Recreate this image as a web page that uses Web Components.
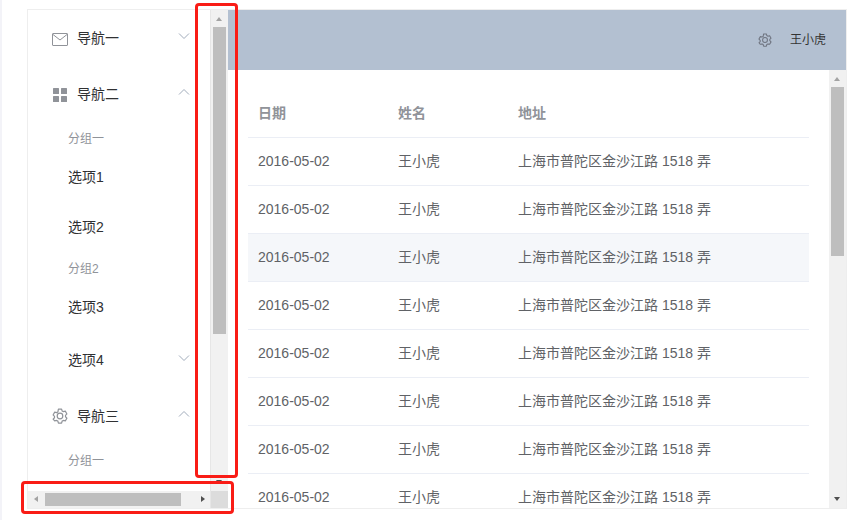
<!DOCTYPE html>
<html lang="zh">
<head>
<meta charset="utf-8">
<title>Layout</title>
<style>
  html, body { margin: 0; width: 860px; height: 520px; overflow: hidden; background: #fff; }
  body { font-family: "Liberation Sans", "Noto Sans CJK SC", sans-serif; }
</style>
</head>
<body>
<app-frame>
  <side-menu slot="side"></side-menu>
  <top-bar slot="top"></top-bar>
  <data-table slot="body"></data-table>
</app-frame>
<red-box style="left:195px;top:3px;width:43px;height:475px"></red-box>
<red-box style="left:21px;top:481px;width:213px;height:33px"></red-box>

<script>
const GEAR_PATH = 'M6.4.7h3.2l.5 1.9 1.3.7 1.9-.5 1.6 2.8-1.4 1.4v1.400l1.400 1.400-1.600 2.800-1.900-.5-1.300.7-.5 1.900H6.400l-.5-1.900-1.300-.7-1.900.5L1.100 10.800l1.400-1.400V8L1.100 6.600l1.600-2.800 1.900.5 1.300-.7z';
const ICONS = {
  mail: '<svg width="16" height="13" viewBox="0 0 16 13" fill="none" stroke="#909399"><rect x=".5" y=".5" width="15" height="12" rx=".5"/><path d="M1 1.5l7 5.5 7-5.5"/></svg>',
  grid: '<svg width="14" height="14" viewBox="0 0 14 14" fill="#909399"><rect width="6" height="6" rx=".5"/><rect x="8" width="6" height="6" rx=".5"/><rect y="8" width="6" height="6" rx=".5"/><rect x="8" y="8" width="6" height="6" rx=".5"/></svg>',
  gear: `<svg width="16" height="16" viewBox="0 0 16 16" fill="none" stroke="#909399" stroke-width="1.2" stroke-linejoin="round"><path d="${GEAR_PATH}" transform="translate(0 .35)"/><circle cx="8" cy="8" r="2.800"/></svg>`
};

class AppFrame extends HTMLElement {
  connectedCallback() {
    this.attachShadow({ mode: 'open' });
    this.shadowRoot.innerHTML = `
      <style>
        :host { display: block; height: 520px; box-sizing: border-box; padding: 9px 13px 11px 25px; border-left: 2px solid #f3f3f8; }
        .box { display: flex; height: 500px; box-sizing: border-box; border: 1px solid #eee; }
        .left { flex: none; width: 200px; display: grid; grid-template: 481px 17px / 183px 17px; }
        .corner { background: #dcdcdc; }
        .right { flex: 1; min-width: 0; display: flex; flex-direction: column; }
        .main { flex: 1; min-height: 0; display: flex; }
        .view { flex: 1; min-width: 0; overflow: hidden; padding: 20px 20px 0; }
        .vp { overflow: hidden; border-right: 1px solid #e6e6e6; }
      </style>
      <div class="box">
        <div class="left">
          <div class="vp"><slot name="side"></slot></div>
          <fake-scroll start="17" size="307"></fake-scroll>
          <fake-scroll horizontal start="17" size="136" style="border-right:1px solid #e6e6e6"></fake-scroll>
          <div class="corner"></div>
        </div>
        <div class="right">
          <slot name="top"></slot>
          <div class="main">
            <div class="view"><slot name="body"></slot></div>
            <fake-scroll start="17" size="169"></fake-scroll>
          </div>
        </div>
      </div>`;
  }
}

// the page draws its own scrollbars so they look like the Windows ones
class FakeScroll extends HTMLElement {
  connectedCallback() {
    const h = this.hasAttribute('horizontal');
    const start = this.getAttribute('start');
    const size = this.getAttribute('size');
    this.attachShadow({ mode: 'open' });
    this.shadowRoot.innerHTML = `
      <style>
        :host { display: block; position: relative; box-sizing: border-box; background: #f1f1f1; flex: none; overflow: hidden; ${h ? 'height: 17px;' : 'width: 17px;'} }
        .thumb { background: #bebebe; ${h ? `margin: 2px 0 0 ${start}px; height: 13px; width: ${size}px;` : `margin: ${start}px 2px 0; width: 13px; height: ${size}px;`} }
        .a { position: absolute; width: 0; height: 0; border: 0 solid transparent; }
        .up { top: 7px; left: 5px; border-width: 0 3.5px 4px; border-bottom-color: #a3a3a3; }
        .down { bottom: 7px; left: 5px; border-width: 4px 3.5px 0; border-top-color: #505050; }
        .back { left: 6px; top: 5px; border-width: 3.5px 4px 3.5px 0; border-right-color: #a3a3a3; }
        .next { right: 5px; top: 5px; border-width: 3.5px 0 3.5px 4px; border-left-color: #505050; }
      </style>
      <div class="thumb"></div>
      <i class="a ${h ? 'back' : 'up'}"></i><i class="a ${h ? 'next' : 'down'}"></i>`;
  }
}

class MenuRow extends HTMLElement {
  connectedCallback() {
    const icon = this.getAttribute('icon');
    const arrow = this.getAttribute('arrow');
    const chev = arrow === 'up' ? 'M1 5.500l5-5 5 5' : 'M1 .5l5 5 5-5';
    const nudge = icon === 'gear' ? 0 : 2;
    this.attachShadow({ mode: 'open' });
    this.shadowRoot.innerHTML = `
      <style>
        :host { display: flex; align-items: center; box-sizing: border-box; height: 50px; padding: 0 20px 0 40px; font-size: 14px; line-height: 16px; color: #303133; }
        :host([arrow]) { height: 56px; }
        :host([icon]) { padding-left: 20px; }
        .ic { width: 24px; margin-right: 5px; display: flex; justify-content: center; padding-top: ${nudge}px; }
        .t { flex: 1; }
        svg.ch { display: block; margin-bottom: 4px; }
      </style>
      ${icon ? `<span class="ic">${ICONS[icon]}</span>` : ''}
      <span class="t"><slot></slot></span>
      ${arrow ? `<svg class="ch" width="12" height="6" viewBox="0 0 12 6" fill="none" stroke="#a0abba"><path d="${chev}"/></svg>` : ''}`;
  }
}

class MenuGroup extends HTMLElement {
  connectedCallback() {
    this.attachShadow({ mode: 'open' });
    this.shadowRoot.innerHTML = `
      <style>
        :host { display: flex; align-items: center; box-sizing: border-box; height: 30px; padding: 4px 0 0 40px; font-size: 12px; line-height: 14px; color: #909399; }
      </style>
      <slot></slot>`;
  }
}

class SideMenu extends HTMLElement {
  connectedCallback() {
    this.attachShadow({ mode: 'open' });
    this.shadowRoot.innerHTML = `
      <style>
        :host { display: block; }
      </style>
      <menu-row icon="mail" arrow="down">导航一</menu-row>
      <menu-row icon="grid" arrow="up">导航二</menu-row>
      <menu-group>分组一</menu-group>
      <menu-row>选项1</menu-row>
      <menu-row>选项2</menu-row>
      <menu-group>分组2</menu-group>
      <menu-row>选项3</menu-row>
      <menu-row arrow="down">选项4</menu-row>
      <menu-row icon="gear" arrow="up">导航三</menu-row>
      <menu-group>分组一</menu-group>`;
  }
}

class TopBar extends HTMLElement {
  connectedCallback() {
    this.attachShadow({ mode: 'open' });
    this.shadowRoot.innerHTML = `
      <style>
        :host { display: flex; align-items: center; justify-content: flex-end; height: 60px; padding-right: 20px; background: #b3c0d1; font-size: 12px; line-height: 14px; color: #333; }
        span { display: flex; margin-right: 18px; }
        svg { width: 14px; height: 14px; }
      </style>
      <span>${ICONS.gear.replace('stroke="#909399"', 'stroke="#6f7480"')}</span>王小虎`;
  }
}

class DataTable extends HTMLElement {
  connectedCallback() {
    this.attachShadow({ mode: 'open' });
    const rows = Array.from({ length: 8 }, (_, i) => `
      <div class="row${i === 2 ? ' hover' : ''}">
        <div>2016-05-02</div><div>王小虎</div><div>上海市普陀区金沙江路 1518 弄</div>
      </div>`).join('');
    this.shadowRoot.innerHTML = `
      <style>
        :host { display: block; font-size: 14px; line-height: 16px; color: #606266; }
        .row { display: grid; grid-template-columns: 140px 120px 1fr; align-items: center; height: 48px; box-sizing: border-box; padding-bottom: 2px; border-bottom: 1px solid #ebeef5; }
        .row > div { padding-left: 10px; }
        .head { color: #909399; font-weight: bold; }
        .hover { background: #f5f7fa; }
      </style>
      <div class="row head"><div>日期</div><div>姓名</div><div>地址</div></div>
      ${rows}`;
  }
}

class RedBox extends HTMLElement {
  connectedCallback() {
    this.attachShadow({ mode: 'open' });
    this.shadowRoot.innerHTML = `
      <style>
        :host { position: absolute; box-sizing: border-box; border: 3px solid #f91c16; border-radius: 4px; }
      </style>`;
  }
}

customElements.define('fake-scroll', FakeScroll);
customElements.define('menu-row', MenuRow);
customElements.define('menu-group', MenuGroup);
customElements.define('side-menu', SideMenu);
customElements.define('top-bar', TopBar);
customElements.define('data-table', DataTable);
customElements.define('red-box', RedBox);
customElements.define('app-frame', AppFrame);
</script>
</body>
</html>
